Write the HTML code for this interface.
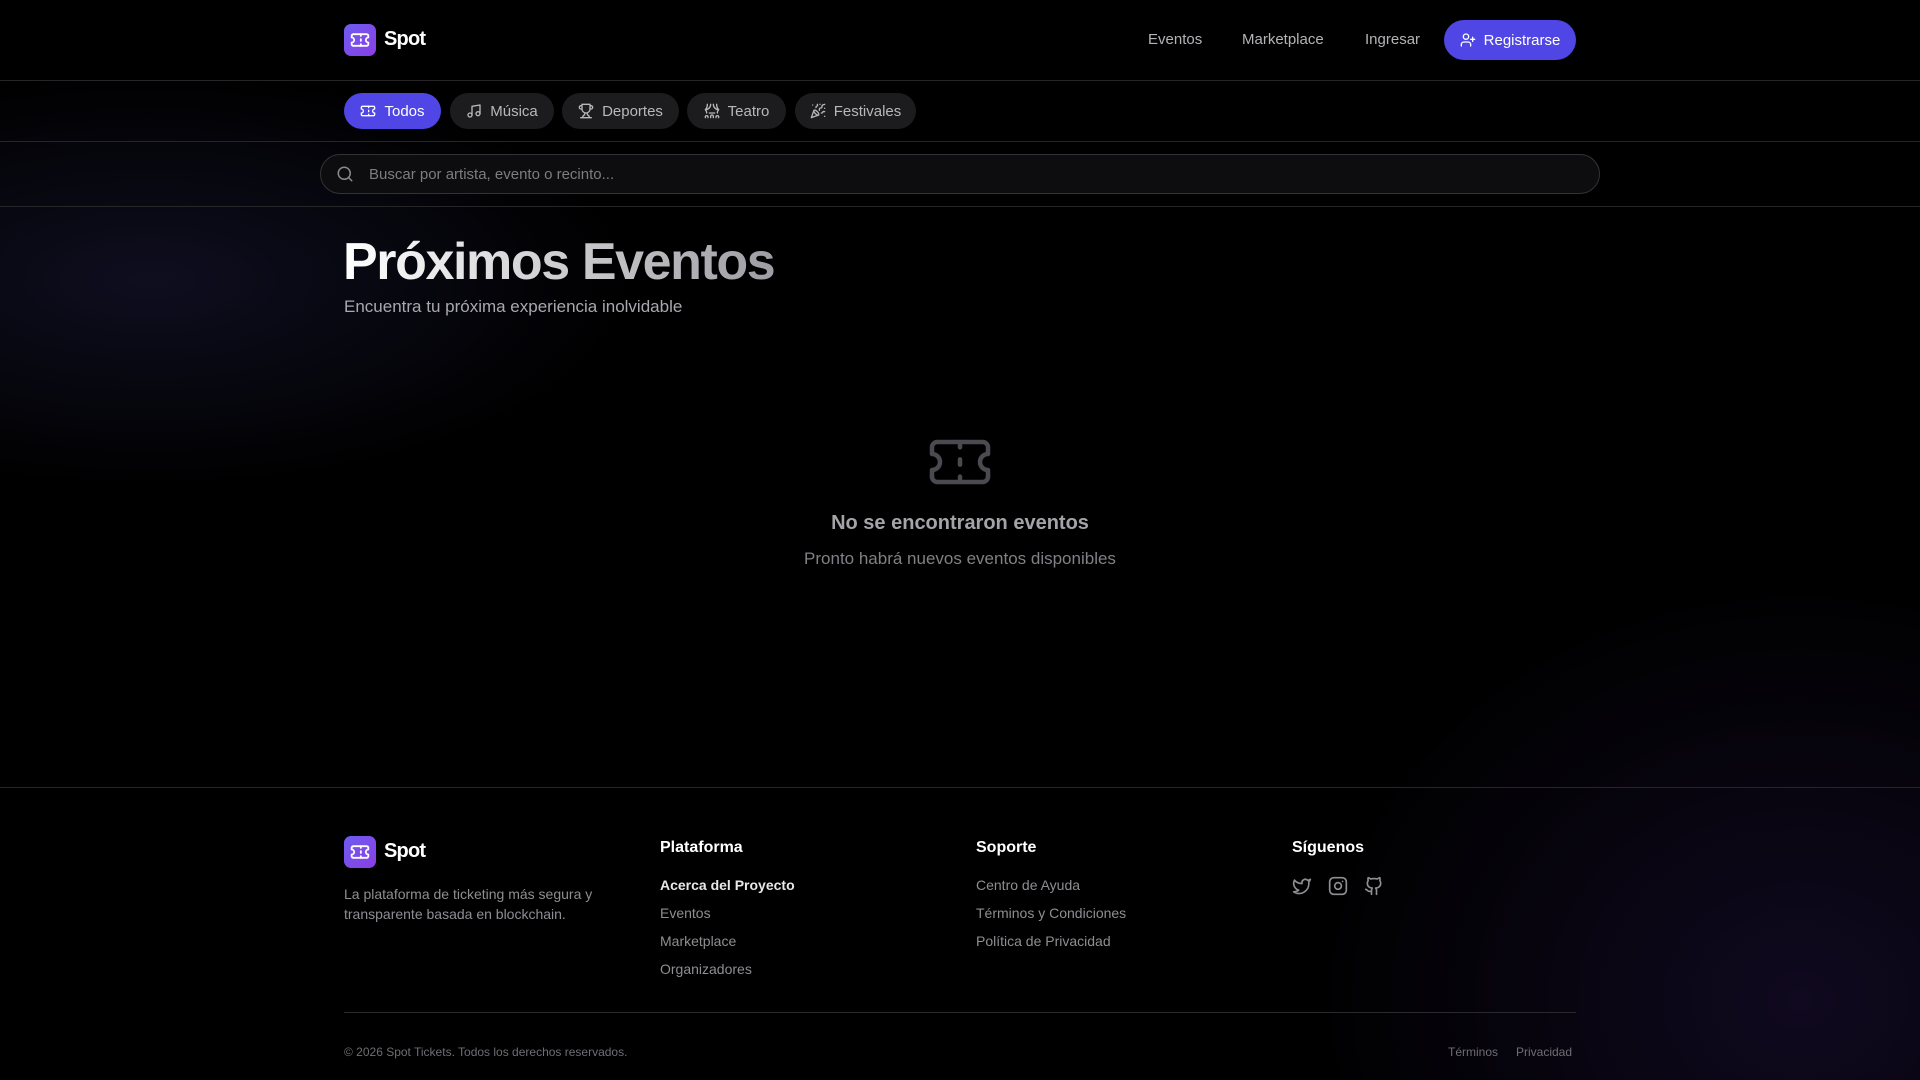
<!DOCTYPE html>
<html><head><meta charset="utf-8"><style>
*{margin:0;padding:0;box-sizing:border-box}
body{width:1920px;height:1080px;overflow:hidden;background:#000;font-family:"Liberation Sans",sans-serif;color:#fff;position:relative}
.bg{position:absolute;inset:0;background:radial-gradient(ellipse 700px 300px at 150px 280px,rgba(40,40,90,.35),transparent 70%),radial-gradient(ellipse 700px 600px at 1800px 1000px,rgba(35,20,70,.45),transparent 70%)}
.abs{position:absolute}
.line{position:absolute;left:0;width:1920px;height:1px;background:#262628}
.logo{width:32px;height:32px;border-radius:7px;background:linear-gradient(135deg,#6d5cf0,#8b3ee6);display:flex;align-items:center;justify-content:center}
.nav{font-size:15px;color:#b4b4b8;top:31px}
.pill{position:absolute;top:93px;height:36px;border-radius:18px;background:#1c1c1e;color:#b8b8bc;font-size:15px;display:flex;align-items:center;justify-content:center;gap:8px}
.pill svg{width:16px;height:16px;fill:none;stroke:currentColor;stroke-width:2;stroke-linecap:round;stroke-linejoin:round}
.fh{font-size:16px;font-weight:bold;top:839px}
.fl{font-size:14px;color:#8e8e93;position:absolute}
</style></head><body><div class="bg"></div>
<div class="abs logo" style="left:344px;top:24px"><svg width="20" height="20" viewBox="0 0 24 24" fill="none" stroke="#fff" stroke-width="2.2" stroke-linecap="round" stroke-linejoin="round"><path d="M2 9a3 3 0 0 1 0 6v2a2 2 0 0 0 2 2h16a2 2 0 0 0 2-2v-2a3 3 0 0 1 0-6V7a2 2 0 0 0-2-2H4a2 2 0 0 0-2 2Z"/><path d="M13 5v2M13 17v2M13 11v2"/></svg></div>
<div class="abs" style="left:384px;top:28px;font-size:20px;font-weight:bold;letter-spacing:-.8px">Spot</div>
<div class="abs nav" style="left:1148px">Eventos</div>
<div class="abs nav" style="left:1242px">Marketplace</div>
<div class="abs nav" style="left:1365px">Ingresar</div>
<div class="abs" style="left:1444px;top:20px;width:132px;height:40px;border-radius:20px;background:#4f46e5;display:flex;align-items:center;justify-content:center;gap:8px;font-size:15px"><svg width="16" height="16" viewBox="0 0 24 24" fill="none" stroke="#fff" stroke-width="2" stroke-linecap="round"><path d="M16 21v-2a4 4 0 0 0-4-4H6a4 4 0 0 0-4 4v2"/><circle cx="9" cy="7" r="4"/><path d="M19 8v6M22 11h-6"/></svg>Registrarse</div>
<div class="line" style="top:80px"></div>
<div class="pill" style="left:344px;width:97px;background:#4f46e5;color:#fff"><svg viewBox="0 0 24 24"><path d="M2 9a3 3 0 0 1 0 6v2a2 2 0 0 0 2 2h16a2 2 0 0 0 2-2v-2a3 3 0 0 1 0-6V7a2 2 0 0 0-2-2H4a2 2 0 0 0-2 2Z"/><path d="M13 5v2M13 17v2M13 11v2"/></svg>Todos</div>
<div class="pill" style="left:450px;width:104px"><svg viewBox="0 0 24 24"><path d="M9 18V5l12-2v13"/><circle cx="6" cy="18" r="3"/><circle cx="18" cy="16" r="3"/></svg>Música</div>
<div class="pill" style="left:562px;width:117px"><svg viewBox="0 0 24 24"><path d="M6 9H4.5a2.5 2.5 0 0 1 0-5H6M18 9h1.5a2.5 2.5 0 0 0 0-5H18M4 22h16M10 14.7V17c0 .6-.5 1-1 1.2C7.9 18.8 7 20.2 7 22M14 14.7V17c0 .6.5 1 1 1.2 1.1.6 2 2 2 3.8M18 2H6v7a6 6 0 0 0 12 0V2Z"/></svg>Deportes</div>
<div class="pill" style="left:687px;width:99px"><svg viewBox="0 0 24 24"><path d="M2 10s3-3 3-8M22 10s-3-3-3-8M10 2c0 4.4-3.6 8-8 8M14 2c0 4.4 3.6 8 8 8M2 10s2 2 2 5M22 10s-2 2-2 5M8 15h8M2 22v-1a2 2 0 0 1 4 0v1M18 22v-1a2 2 0 0 1 4 0v1M10 22v-2a2 2 0 0 1 4 0v2"/></svg>Teatro</div>
<div class="pill" style="left:795px;width:121px"><svg viewBox="0 0 24 24"><path d="M5.8 11.3 2 22l10.7-3.8M4 3h.01M22 8h.01M15 2h.01M22 20h.01M22 2l-2.2.7a2.9 2.9 0 0 0-1.9 3.2c.1.9-.6 1.6-1.5 1.6h-.4c-.9 0-1.7.6-1.9 1.5L14 11M22 13l-.8-.3c-.9-.4-1.900.2-2.100 1.1-.1.7-.8 1.2-1.5 1.2H17M11 2l.3.8c.4.9-.2 1.9-1.1 2.1-.7.1-1.2.8-1.2 1.5V7"/><path d="M11 13c1.9 1.9 2.8 4.1 2 4.9-.8.8-3-.1-4.900-2-1.9-1.9-2.8-4.1-2-4.9.8-.8 3 .1 4.9 2Z"/></svg>Festivales</div>
<div class="line" style="top:141px"></div>
<div class="abs" style="left:320px;top:154px;width:1280px;height:40px;border:1px solid #333336;border-radius:20px;background:#0d0d0f"></div>
<svg class="abs" style="left:336px;top:165px" width="18" height="18" viewBox="0 0 24 24" fill="none" stroke="#8a8a90" stroke-width="2" stroke-linecap="round"><circle cx="11" cy="11" r="8"/><path d="m21 21-4.3-4.3"/></svg>
<div class="abs" style="left:369px;top:166px;font-size:15px;color:#7c7c82">Buscar por artista, evento o recinto...</div>
<div class="line" style="top:206px"></div>
<div class="abs" style="left:343px;top:232px;font-size:52px;font-weight:bold;letter-spacing:-1.4px;background:linear-gradient(90deg,#fff,#9d9da3);-webkit-background-clip:text;color:transparent">Próximos Eventos</div>
<div class="abs" style="left:344px;top:297px;font-size:17px;color:#a8a8ae">Encuentra tu próxima experiencia inolvidable</div>
<svg class="abs" style="left:928px;top:434px" width="64" height="56" viewBox="0 0 24 21" fill="none" stroke="#4a4a50" stroke-width="1.7" stroke-linecap="round" stroke-linejoin="round"><path d="M1.5 7.5a3 3 0 0 1 0 6v2.5a2 2 0 0 0 2 2h17a2 2 0 0 0 2-2v-2.5a3 3 0 0 1 0-6V5a2 2 0 0 0-2-2h-17a2 2 0 0 0-2 2Z"/><path d="M12 3v2M12 16v2M12 9.5v2"/></svg>
<div class="abs" style="left:0;width:1920px;text-align:center;top:512px;font-size:20px;font-weight:bold;color:#a3a3a8">No se encontraron eventos</div>
<div class="abs" style="left:0;width:1920px;text-align:center;top:549px;font-size:17px;color:#808086">Pronto habrá nuevos eventos disponibles</div>
<div class="line" style="top:787px"></div>
<div class="abs logo" style="left:344px;top:836px"><svg width="20" height="20" viewBox="0 0 24 24" fill="none" stroke="#fff" stroke-width="2.2" stroke-linecap="round" stroke-linejoin="round"><path d="M2 9a3 3 0 0 1 0 6v2a2 2 0 0 0 2 2h16a2 2 0 0 0 2-2v-2a3 3 0 0 1 0-6V7a2 2 0 0 0-2-2H4a2 2 0 0 0-2 2Z"/><path d="M13 5v2M13 17v2M13 11v2"/></svg></div>
<div class="abs" style="left:384px;top:840px;font-size:20px;font-weight:bold;letter-spacing:-.8px">Spot</div>
<div class="fl" style="left:344px;top:884px;width:290px;line-height:20px">La plataforma de ticketing más segura y transparente basada en blockchain.</div>
<div class="abs fh" style="left:660px">Plataforma</div>
<div class="fl" style="left:660px;top:877px;color:#e8e8ea;font-weight:bold">Acerca del Proyecto</div>
<div class="fl" style="left:660px;top:905px">Eventos</div>
<div class="fl" style="left:660px;top:933px">Marketplace</div>
<div class="fl" style="left:660px;top:961px">Organizadores</div>
<div class="abs fh" style="left:976px">Soporte</div>
<div class="fl" style="left:976px;top:877px">Centro de Ayuda</div>
<div class="fl" style="left:976px;top:905px">Términos y Condiciones</div>
<div class="fl" style="left:976px;top:933px">Política de Privacidad</div>
<div class="abs fh" style="left:1292px">Síguenos</div>
<svg class="abs" style="left:1292px;top:876px" width="20" height="20" viewBox="0 0 24 24" fill="none" stroke="#8e8e93" stroke-width="2" stroke-linejoin="round"><path d="M22 4s-.7 2.1-2 3.4c1.6 10-9.4 17.3-18 11.6 2.2.1 4.4-.6 6-2C3 15.5.5 9.6 3 5c2.2 2.6 5.6 4.1 9 4-.9-4.2 4-6.6 7-3.8 1.1 0 3-1.2 3-1.2Z"/></svg>
<svg class="abs" style="left:1328px;top:876px" width="20" height="20" viewBox="0 0 24 24" fill="none" stroke="#8e8e93" stroke-width="2" stroke-linecap="round"><rect x="2" y="2" width="20" height="20" rx="5"/><path d="M16 11.4A4 4 0 1 1 12.6 8 4 4 0 0 1 16 11.4zM17.5 6.5h.01"/></svg>
<svg class="abs" style="left:1364px;top:876px" width="20" height="20" viewBox="0 0 24 24" fill="none" stroke="#8e8e93" stroke-width="2" stroke-linecap="round" stroke-linejoin="round"><path d="M15 22v-4a4.8 4.8 0 0 0-1-3.5c3 0 6-2 6-5.5.1-1.3-.3-2.5-1-3.5.3-1.2.3-2.4 0-3.5 0 0-1 0-3 1.5-2.6-.5-5.4-.5-8 0C6 2 5 2 5 2c-.3 1.1-.3 2.3 0 3.5A5.4 5.4 0 0 0 4 9c0 3.5 3 5.5 6 5.5-.4.5-.7 1.1-.8 1.7-.2.6-.2 1.2-.2 1.8v4M9 18c-4.5 2-5-2-7-2"/></svg>
<div class="abs" style="left:344px;top:1012px;width:1232px;height:1px;background:#2a2a2e"></div>
<div class="abs" style="left:344px;top:1045px;font-size:12px;color:#6e6e74">© 2026 Spot Tickets. Todos los derechos reservados.</div>
<div class="abs" style="left:1448px;top:1045px;font-size:12px;color:#6e6e74">Términos</div>
<div class="abs" style="left:1516px;top:1045px;font-size:12px;color:#6e6e74">Privacidad</div>
</body></html>
